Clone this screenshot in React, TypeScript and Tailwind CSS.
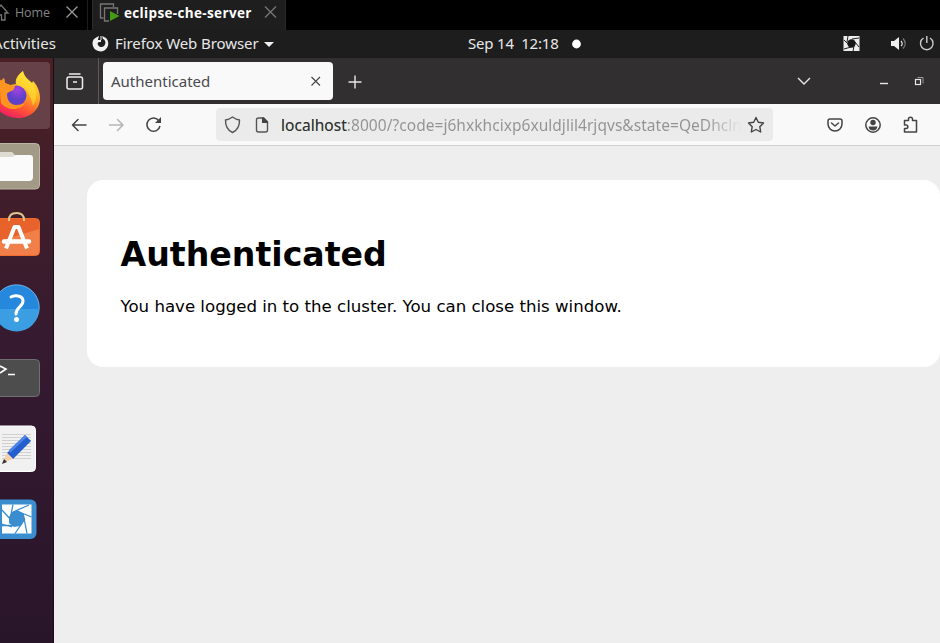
import React from 'react';

const ubuntu = "font-['Noto_Sans','Open_Sans',sans-serif]";

function VmTabs() {
  return (
    <div className="flex h-[30px] shrink-0 bg-black">
      <div className="flex w-[88px] shrink-0 border-r border-[#1c1c1c]">
        <svg className="h-[30px] w-[15px]" viewBox="0 0 15 30" fill="none" stroke="#777" strokeWidth="1.3">
          <path d="M-6 13 1 5l7 8H5v7H1.500v-5H-1" />
        </svg>
        <span className="w-[47px] pt-[5px] font-['Open_Sans',sans-serif] text-[12.5px] leading-4 tracking-[-0.1px] text-[#858585]">Home</span>
        <svg className="mt-1.5 h-3.5 w-5" viewBox="62 6 20 14" stroke="#999" strokeWidth="1.300">
          <path d="m66.500 6.500 11 11m0-11-11 11" />
        </svg>
      </div>
      <div className="ml-1 flex w-[194px] shrink-0 border-x border-[#292929] bg-[#1e1e1e]">
        <svg className="h-[30px] w-[31px]" viewBox="93 0 31 30" fill="none" stroke="#777" strokeWidth="1.300">
          <path d="M103.500 18h-3V4h13v3" />
          <path d="M109 21h-4.500V8h13v6" />
          <path d="m110 11 9.500 5-9.500 5z" fill="#439b17" stroke="none" />
        </svg>
        <span className="w-[136px] whitespace-nowrap pt-[5px] font-['Open_Sans',sans-serif] text-[13.5px] font-bold leading-4 tracking-[0.35px] text-white">eclipse-che-server</span>
        <svg className="mt-1.5 h-3.5 w-5" viewBox="260 6 20 14" stroke="#777" strokeWidth="1.300">
          <path d="m265 6.500 11 11m0-11-11 11" />
        </svg>
      </div>
    </div>
  );
}

function GnomeBar() {
  return (
    <div className={`flex h-7 shrink-0 bg-[#1d1d1d] text-[15px] leading-[27px] text-[#e8e8e8] ${ubuntu}`}>
      <div className="flex w-[92px] shrink-0 overflow-hidden whitespace-nowrap">
        <span className="ml-[-7px] tracking-[0.05px]">Activities</span>
      </div>
      <svg className="h-7 w-[23px] shrink-0" viewBox="92 30 23 28">
        <path d="M97 37c-1 1-2 1-3 2-3 4-1 9 2 11 3 2 8 2 10-1 3-3 3-8 0-11l-4-2 1 3c3 1 3 5 1 7-2 2-5 1-6-1-1-2 0-3 2-3h1v-2h-3c0-2 1-3 1-4z" fill="#f0f0f0" />
        <path d="M101 36v4" stroke="#f0f0f0" />
      </svg>
      <span className="w-[147px] shrink-0 whitespace-nowrap tracking-[-0.08px]">Firefox Web Browser</span>
      <svg className="h-7 w-[206px] shrink-0" viewBox="262 30 206 28">
        <path d="M264 42h10l-5 5z" fill="#f0f0f0" />
      </svg>
      <span className="w-[100px] shrink-0 whitespace-pre tracking-[-0.2px]">Sep 14  12:18</span>
      <svg className="h-7 w-[372px] shrink-0" viewBox="568 30 372 28" fill="none">
        <circle cx="576.500" cy="44" r="4.400" fill="#fff" />
        <path d="M843.500 36h16v15h-16z" fill="#eee" />
        <circle cx="851.500" cy="43.500" r="4.200" fill="#171717" />
        <path d="m848 36-1 6m5-3 7-1m-4 4 4 5m-5-2-1 7m-2-5-7 2m4-5-4-4" stroke="#222" />
        <path d="M891 41h3l5-4v13l-5-4h-3z" fill="#eee" />
        <path d="M901 41q2.500 3 0 5" stroke="#ddd" strokeWidth="1.300" />
        <path d="M903 38.500q4.500 5 0 10" stroke="#777" strokeWidth="1.300" />
        <path d="M923.500 38a6.300 6.300 0 1 0 6.500 0M926.800 36v7" stroke="#ccc" strokeWidth="1.400" />
      </svg>
    </div>
  );
}

function Dock() {
  return (
    <div className="flex w-[54px] shrink-0 flex-col border-r border-[#1b0d18] bg-linear-to-b from-[#4b2024] via-[#351a30] via-50% to-[#29152a]">
      <svg className="h-[78px] w-[54px] shrink-0" viewBox="0 58 54 78">
        <defs>
          <linearGradient id="fx" x1="0.800" y1="0" x2="0.300" y2="1">
            <stop stopColor="#fff044" /><stop offset=".4" stopColor="#ffad23" /><stop offset=".7" stopColor="#ff5732" /><stop offset="1" stopColor="#f21768" />
          </linearGradient>
          <radialGradient id="globe" cx=".55" cy=".2"><stop stopColor="#a342e4" /><stop offset="1" stopColor="#5f40c9" /></radialGradient>
        </defs>
        <rect x="-6" y="62" width="56" height="67" rx="4" fill="#664248" />
        <path d="M-8 94C-7 84-3 80-1 78l2 3 3-3 1 5 5 2 6-1c-1-5 2-9 7-13 1 6 6 9 9 12l1-2c5 5 7 12 7 17 0 12-10 20-22 20S-8 110-8 94z" fill="url(#fx)" />
        <path d="M16 84c-1-5 2-9 7-13 1 6 6 9 9 12 5 7 6 15 1 23-2-8-4-14-8-17z" fill="#ffe332" fillOpacity=".6" />
        <circle cx="16.500" cy="95.500" r="10" fill="url(#globe)" />
        <path d="M-1 78 1 81l3-3 1 5 5 2 5 1-1 3c-2 3-6 2-7 5 0 7 4 11 9 11 4 0 7-1 9-2-3 7-17 9-24 0z" fill="#ff9421" />
      </svg>
      <svg className="h-16 w-[54px] shrink-0" viewBox="0 136 54 64">
        <rect x="-8" y="143.500" width="47.500" height="45.500" rx="4" fill="#a29a86" stroke="#bbb5a4" />
        <path d="M0 152h12l3 3h15v6H0z" fill="#dedbd0" />
        <path d="M0 157h12l4-2h14q3 0 3 3v19q0 4-4 4H0z" fill="#fafafa" />
      </svg>
      <svg className="h-[70px] w-[54px] shrink-0" viewBox="0 200 54 70" fill="none">
        <rect x="-8" y="218.500" width="47.500" height="37" rx="4" fill="#e8622c" stroke="#f06b2e" />
        <path d="M0 241 39 229v22q0 4-4 4H0z" fill="#f07f4a" />
        <path d="M9 221v-1q0-7 7.500-7t7.500 7v1" stroke="#e2c58c" strokeWidth="2" />
        <path d="M6 248.500 14.500 227h4L27 248.500" stroke="#fff" strokeWidth="4" strokeLinejoin="round" />
        <path d="M4 241.500h25" stroke="#fff" strokeWidth="4.500" strokeLinecap="round" />
      </svg>
      <svg className="h-[75px] w-[54px] shrink-0" viewBox="0 270 54 75" fill="none">
        <circle cx="16.500" cy="307.500" r="22.700" fill="#2588dc" stroke="#69b5e9" />
        <path d="M-6 309h45a22.500 22.500 0 0 1-45 0z" fill="#3b9ee3" />
        <path d="M11 297c3-2 12-2 12 4s-7 6-7 13" stroke="#fff" strokeWidth="3" strokeLinecap="round" />
        <circle cx="16.500" cy="319.500" r="2.500" fill="#fff" />
      </svg>
      <svg className="h-[65px] w-[54px] shrink-0" viewBox="0 345 54 65" fill="none">
        <rect x="-8" y="359.500" width="47.500" height="37" rx="4" fill="#4d4d4d" stroke="#6f6f6f" />
        <path d="m0 366 6 3-6 4m8 1.500h7" stroke="#fff" strokeWidth="1.600" />
      </svg>
      <svg className="h-[75px] w-[54px] shrink-0" viewBox="0 410 54 75" fill="none">
        <rect x="-8" y="426" width="43.500" height="45.500" rx="4" fill="#f1f1f1" stroke="#fff" />
        <path d="M2 434.500h29m-29 3h29m-29 3h29m-29 3h29m-29 3h29m-29 3h29m-29 3h29m-29 3h29m-29 3h29" stroke="#d0d0d0" />
        <path d="m7 453 18-18 6 6-18 18z" fill="#245dcc" />
        <path d="m9 450 16-15 2 2-17 16z" fill="#4d83ea" />
        <path d="m7 453-5 10 11-4z" fill="#f5d0ab" />
        <path d="m4 459-2 5 5-2z" fill="#333" />
      </svg>
      <svg className="h-[70px] w-[54px] shrink-0" viewBox="0 485 54 70" fill="none">
        <rect x="-8" y="499.500" width="44.500" height="39.500" rx="6" fill="#3a8dce" />
        <path d="M2 504.500h29.500v29H2z" fill="#fff" />
        <path d="m12 512 6-1.500 5 3 2 6-4 6-7 1.500-5-4v-6z" fill="#3a8dce" />
        <path d="M13 504.500 10.500 517M2 510l10 11M29 505l-16 7M17 511l14.500 6M23 513l4 20.500M25 519l-10 14.500M21 525.500H2M12 527 2 524" stroke="#3a8dce" strokeWidth="1.300" />
      </svg>
    </div>
  );
}

function TabStrip() {
  return (
    <div className="flex h-[46px] shrink-0 bg-[#322f30]">
      <svg className="h-[46px] w-[49px] shrink-0" viewBox="54 58 49 46" fill="none" stroke="#eee" strokeWidth="1.500">
        <path d="M69.500 74h10.500" strokeLinecap="round" />
        <rect x="67" y="77" width="15.500" height="12" rx="2" />
        <path d="M73 82h4" />
        <path d="M98.500 58v46" stroke="#5b595a" strokeWidth="1" />
      </svg>
      <div className="mt-1 flex h-[38px] w-[230px] shrink-0 items-center rounded bg-[#f9f9f9] pl-2">
        <span className={`w-[196px] pt-px text-[15px] text-[#4a4a50] ${ubuntu}`}>Authenticated</span>
        <svg className="h-6 w-6" viewBox="307 69 24 24" stroke="#444" strokeWidth="1.100"><path d="m311.500 77 8.500 8.500m0-8.500-8.500 8.500" /></svg>
      </div>
      <svg className="h-[46px] w-[607px] shrink-0" viewBox="333 58 607 46" fill="none" stroke="#e8e8e8" strokeWidth="1.400">
        <path d="M348.500 82h13m-6.500-6.500v13" />
        <path d="m798 78 6 6 6-6" />
        <path d="M880 83.500h8" />
        <path d="M917.500 77.500h5.500v6" stroke="#999" strokeWidth="1" />
        <rect x="915.500" y="79.500" width="5" height="5" strokeWidth="1.200" />
      </svg>
    </div>
  );
}

function Toolbar() {
  return (
    <div className="flex h-[42px] shrink-0 border-b border-[#cfcfcf] bg-[#f9f9f9]">
      <svg className="h-[41px] w-[162px] shrink-0" viewBox="54 104 162 41" fill="none" stroke="#444" strokeWidth="1.500">
        <path d="M86 125H72.500m5.500-5.500-5.500 5.500 5.500 5.500" strokeLinecap="round" strokeLinejoin="round" />
        <path d="M109.500 125H123m-5.500-5.500 5.500 5.500-5.500 5.500" stroke="#b5b5b5" strokeLinecap="round" strokeLinejoin="round" />
        <path d="M159 121a6.600 6.600 0 1 0 1 5" />
        <path d="M161 117v6h-6z" fill="#444" stroke="none" />
      </svg>
      <div className="mt-1 flex h-[33px] w-[557px] shrink-0 items-center rounded bg-[#ebebeb]">
        <svg className="h-[34px] w-[65px] shrink-0" viewBox="216 108 65 34" fill="none" stroke="#555" strokeWidth="1.400">
          <path d="M232.500 117q3.500 2.500 7 3c.2 6-1.500 10-7 12.500-5.500-2.500-7.200-6.500-7-12.500q3.500-.5 7-3z" strokeLinejoin="round" />
          <path d="M263.500 118h-5q-2 0-2 2v10q0 2 2 2h7q2 0 2-2v-8z" />
          <path d="M262 117.500h2l4 4v1.500h-6z" fill="#444" stroke="none" />
        </svg>
        <span className={`w-[461px] shrink-0 overflow-hidden whitespace-nowrap bg-linear-to-r from-[#929292] from-92% to-[#ebebeb] bg-clip-text text-[15.5px] leading-6 tracking-[0.04px] text-transparent ${ubuntu}`}>
          <span className="text-[#333]">localhost</span>:8000/?code=j6hxkhcixp6xuldjlil4rjqvs&amp;state=QeDhcln
        </span>
        <svg className="h-[34px] w-[31px]" viewBox="742 108 31 34" fill="none" stroke="#444" strokeWidth="1.400" strokeLinejoin="round">
          <path d="m756 117.500 2.300 4.700 5.200.8-3.700 3.700.9 5.300-4.700-2.500-4.700 2.500.9-5.300-3.700-3.700 5.200-.8z" />
        </svg>
      </div>
      <svg className="h-[41px] w-[167px] shrink-0" viewBox="773 104 167 41" fill="none" stroke="#444" strokeWidth="1.500" strokeLinejoin="round">
        <path d="M830 119h10q2 0 2 2v3a7 7 0 0 1-14 0v-3q0-2 2-2z" />
        <path d="m831.500 123 3.500 3 3.500-3" strokeLinecap="round" />
        <circle cx="873" cy="125" r="7.200" />
        <circle cx="873" cy="122.500" r="2.700" fill="#444" stroke="none" />
        <path d="M868.500 126.500h9c-.5 3-2.500 4-4.500 4s-4-1-4.500-4z" fill="#444" stroke="none" />
        <path d="M904.500 125v-4.500h4V119c0-2.500 4-2.500 4 0v1.500h4v11.500h-12v-3.500h1.500c2.500 0 2.500-3.500 0-3.500z" />
      </svg>
    </div>
  );
}

export default function App() {
  return (
    <div className="flex h-[643px] w-[940px] flex-col overflow-hidden bg-black">
      <VmTabs />
      <GnomeBar />
      <div className="flex min-h-0 flex-1">
        <Dock />
        <div className="flex min-w-0 flex-1 flex-col bg-[#eee]">
          <TabStrip />
          <Toolbar />
          <main className="ml-[33px] mt-[34px] h-[186.5px] w-[852.5px] rounded-2xl bg-white pl-[33.500px] pt-[55px] font-['DejaVu_Sans',sans-serif] text-black">
            <h1 className="text-[33.2px] font-bold leading-10">Authenticated</h1>
            <p className="mt-[20px] text-[16.6px] leading-6">You have logged in to the cluster. You can close this window.</p>
          </main>
        </div>
      </div>
    </div>
  );
}
